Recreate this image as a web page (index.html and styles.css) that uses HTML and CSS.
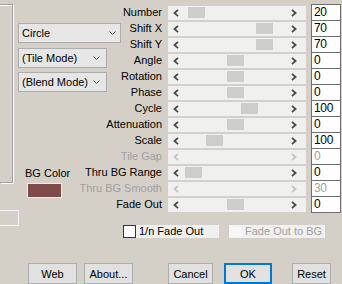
FILE: index.html
```html
<!DOCTYPE html>
<html>
<head>
<meta charset="utf-8">
<link rel="stylesheet" href="styles.css">
</head>
<body>
<div class="top">
  <div class="left">
    <div class="left-top">
      <div class="group"></div>
      <div class="left-col">
        <div class="combo wide"><span>Circle</span><svg class="cchev" viewBox="0 0 7 4"><polyline points="0.5,0.5 3.5,3.5 6.5,0.5"/></svg></div>
        <div class="combo mid tile"><span>(Tile Mode)</span><svg class="cchev" viewBox="0 0 7 4"><polyline points="0.5,0.5 3.5,3.5 6.5,0.5"/></svg></div>
        <div class="combo mid blend"><span>(Blend Mode)</span><svg class="cchev" viewBox="0 0 7 4"><polyline points="0.5,0.5 3.5,3.5 6.5,0.5"/></svg></div>
        <div class="bg-label">BG Color</div>
        <div class="swatch"></div>
      </div>
    </div>
    <div class="edit-stub"></div>
  </div>

  <div class="params">
    <div class="lbl">Number</div>
    <div class="track"><svg class="arr" viewBox="0 0 6 8"><polyline points="5,0.8 1.5,4 5,7.2"/></svg><div class="thumb" style="left:20px"></div><svg class="arr" viewBox="0 0 6 8"><polyline points="1,0.8 4.5,4 1,7.2"/></svg></div>
    <div class="val">20</div>

    <div class="lbl">Shift X</div>
    <div class="track"><svg class="arr" viewBox="0 0 6 8"><polyline points="5,0.8 1.5,4 5,7.2"/></svg><div class="thumb" style="left:88px"></div><svg class="arr" viewBox="0 0 6 8"><polyline points="1,0.8 4.5,4 1,7.2"/></svg></div>
    <div class="val">70</div>

    <div class="lbl">Shift Y</div>
    <div class="track"><svg class="arr" viewBox="0 0 6 8"><polyline points="5,0.8 1.5,4 5,7.2"/></svg><div class="thumb" style="left:88px"></div><svg class="arr" viewBox="0 0 6 8"><polyline points="1,0.8 4.5,4 1,7.2"/></svg></div>
    <div class="val">70</div>

    <div class="lbl">Angle</div>
    <div class="track"><svg class="arr" viewBox="0 0 6 8"><polyline points="5,0.8 1.5,4 5,7.2"/></svg><div class="thumb" style="left:59px"></div><svg class="arr" viewBox="0 0 6 8"><polyline points="1,0.8 4.5,4 1,7.2"/></svg></div>
    <div class="val">0</div>

    <div class="lbl">Rotation</div>
    <div class="track"><svg class="arr" viewBox="0 0 6 8"><polyline points="5,0.8 1.5,4 5,7.2"/></svg><div class="thumb" style="left:59px"></div><svg class="arr" viewBox="0 0 6 8"><polyline points="1,0.8 4.5,4 1,7.2"/></svg></div>
    <div class="val">0</div>

    <div class="lbl">Phase</div>
    <div class="track"><svg class="arr" viewBox="0 0 6 8"><polyline points="5,0.8 1.5,4 5,7.2"/></svg><div class="thumb" style="left:59px"></div><svg class="arr" viewBox="0 0 6 8"><polyline points="1,0.8 4.5,4 1,7.2"/></svg></div>
    <div class="val">0</div>

    <div class="lbl">Cycle</div>
    <div class="track"><svg class="arr" viewBox="0 0 6 8"><polyline points="5,0.8 1.5,4 5,7.2"/></svg><div class="thumb" style="left:73px"></div><svg class="arr" viewBox="0 0 6 8"><polyline points="1,0.8 4.5,4 1,7.2"/></svg></div>
    <div class="val">100</div>

    <div class="lbl">Attenuation</div>
    <div class="track"><svg class="arr" viewBox="0 0 6 8"><polyline points="5,0.8 1.5,4 5,7.2"/></svg><div class="thumb" style="left:59px"></div><svg class="arr" viewBox="0 0 6 8"><polyline points="1,0.8 4.5,4 1,7.2"/></svg></div>
    <div class="val">0</div>

    <div class="lbl">Scale</div>
    <div class="track"><svg class="arr" viewBox="0 0 6 8"><polyline points="5,0.8 1.5,4 5,7.2"/></svg><div class="thumb" style="left:38px"></div><svg class="arr" viewBox="0 0 6 8"><polyline points="1,0.8 4.5,4 1,7.2"/></svg></div>
    <div class="val">100</div>

    <div class="lbl dis">Tile Gap</div>
    <div class="track dis"><svg class="arr" viewBox="0 0 6 8"><polyline points="5,0.8 1.5,4 5,7.2"/></svg><svg class="arr" viewBox="0 0 6 8"><polyline points="1,0.8 4.5,4 1,7.2"/></svg></div>
    <div class="val dis">0</div>

    <div class="lbl">Thru BG Range</div>
    <div class="track"><svg class="arr" viewBox="0 0 6 8"><polyline points="5,0.8 1.5,4 5,7.2"/></svg><div class="thumb" style="left:17px"></div><svg class="arr" viewBox="0 0 6 8"><polyline points="1,0.8 4.5,4 1,7.2"/></svg></div>
    <div class="val">0</div>

    <div class="lbl dis">Thru BG Smooth</div>
    <div class="track dis"><svg class="arr" viewBox="0 0 6 8"><polyline points="5,0.8 1.5,4 5,7.2"/></svg><svg class="arr" viewBox="0 0 6 8"><polyline points="1,0.8 4.5,4 1,7.2"/></svg></div>
    <div class="val dis">30</div>

    <div class="lbl">Fade Out</div>
    <div class="track"><svg class="arr" viewBox="0 0 6 8"><polyline points="5,0.8 1.5,4 5,7.2"/></svg><div class="thumb" style="left:59px"></div><svg class="arr" viewBox="0 0 6 8"><polyline points="1,0.8 4.5,4 1,7.2"/></svg></div>
    <div class="val">0</div>
  </div>
</div>

<div class="checks">
  <div class="check"><span class="cbox"></span><span class="clabel">1/n Fade Out</span></div>
  <div class="check dis"><span class="cbox"></span><span class="clabel">Fade Out to BG</span></div>
</div>

<div class="buttons">
  <button class="btn web">Web</button>
  <button class="btn about">About...</button>
  <button class="btn cancel">Cancel</button>
  <button class="btn ok">OK</button>
  <button class="btn reset">Reset</button>
</div>
</body>
</html>
```

FILE: styles.css
```css
html, body {
  margin: 0;
  padding: 0;
}
body {
  width: 342px;
  height: 284px;
  overflow: hidden;
  background: #d4d0c8;
  font-family: "Liberation Sans", Arial, sans-serif;
  font-size: 11px;
  color: #000;
}

.top {
  display: grid;
  grid-template-rows: 208px;
  padding-top: 4px;
}
.top > * {
  grid-area: 1 / 1;
}

/* left panel */
.left {
  justify-self: start;
  align-self: start;
  display: flex;
  flex-direction: column;
}
.left-top {
  display: flex;
  align-items: flex-start;
}
.group {
  width: 12px;
  height: 177px;
  border: 1px solid #a0a0a0;
  border-left: none;
  box-shadow: 1px 1px 0 #fff, inset 0 1px 0 #fff;
}
.left-col {
  margin-left: 5px;
  padding-top: 19px;
  display: flex;
  flex-direction: column;
  align-items: flex-start;
}
.combo {
  box-sizing: border-box;
  height: 20px;
  border: 1px solid #acacac;
  background: #e6e6e6;
  display: flex;
  align-items: center;
  justify-content: space-between;
  padding: 0 4px 0 3px;
  white-space: nowrap;
}
.combo.wide { width: 103px; }
.combo.mid { width: 89px; padding-right: 6px; }
.combo.tile { margin-top: 5px; }
.combo.blend { margin-top: 4px; }
.cchev {
  width: 7px;
  height: 4px;
  fill: none;
  stroke: #555;
  stroke-width: 1;
}
.bg-label {
  margin: 74px 0 0 7px;
  line-height: 14px;
}
.swatch {
  margin: 3px 0 0 9px;
  width: 35px;
  height: 15px;
  box-sizing: border-box;
  border: 1px solid #ececec;
  background: #7f4a4a;
}
.edit-stub {
  margin-top: 12px;
  width: 19px;
  height: 16px;
  box-sizing: border-box;
  border: 1px solid #f4f4f4;
  border-left: none;
}

/* parameters */
.params {
  display: grid;
  grid-template-columns: 162px 149px 30px;
  grid-auto-rows: 16px;
}
.lbl {
  text-align: right;
  line-height: 16px;
  white-space: nowrap;
}
.lbl.dis { color: #a0a0a0; }
.track {
  position: relative;
  box-sizing: border-box;
  margin: 2px 0 0 6px;
  width: 138px;
  height: 14px;
  background: #f0f0f0;
  display: flex;
  align-items: center;
  justify-content: space-between;
  padding: 0 9px 0 5px;
}
.arr {
  width: 6px;
  height: 8px;
  fill: none;
  stroke: #4a4a4a;
  stroke-width: 1.8;
}
.track.dis .arr { stroke: #c4c4c4; }
.thumb {
  position: absolute;
  top: 1px;
  width: 17px;
  height: 11px;
  background: #cdcdcd;
}
.val {
  box-sizing: border-box;
  height: 17px;
  border: 1px solid #6f6f6f;
  background: #fff;
  padding-left: 2px;
  line-height: 15px;
  font-size: 12px;
  letter-spacing: -0.3px;
}
.val.dis { color: #a0a0a0; }

/* checkboxes */
.checks {
  display: flex;
  gap: 10px;
  margin-top: 13px;
  padding-left: 123px;
}
.check {
  display: flex;
  height: 13px;
}
.cbox {
  box-sizing: border-box;
  width: 13px;
  height: 13px;
  border: 1px solid #333;
  background: #fff;
}
.clabel {
  width: 83px;
  box-sizing: border-box;
  padding-left: 3px;
  background: #f0f0f0;
  line-height: 13px;
  white-space: nowrap;
}
.check.dis .cbox {
  border-color: #f4f4f4;
  background: #f7f7f7;
}
.check.dis .clabel { color: #a0a0a0; }

/* buttons */
.buttons {
  display: flex;
  margin-top: 25px;
}
.btn {
  appearance: none;
  box-sizing: border-box;
  height: 21px;
  margin: 0;
  padding: 0;
  border: 1px solid #adadad;
  background: #e1e1e1;
  font: inherit;
  color: #000;
  display: flex;
  align-items: center;
  justify-content: center;
}
.web { margin-left: 28px; width: 49px; }
.about { margin-left: 7px; width: 49px; }
.cancel { margin-left: 35px; width: 45px; }
.ok { margin-left: 11px; width: 48px; border: 2px solid #0078d7; }
.reset { margin-left: 20px; width: 39px; }
```
